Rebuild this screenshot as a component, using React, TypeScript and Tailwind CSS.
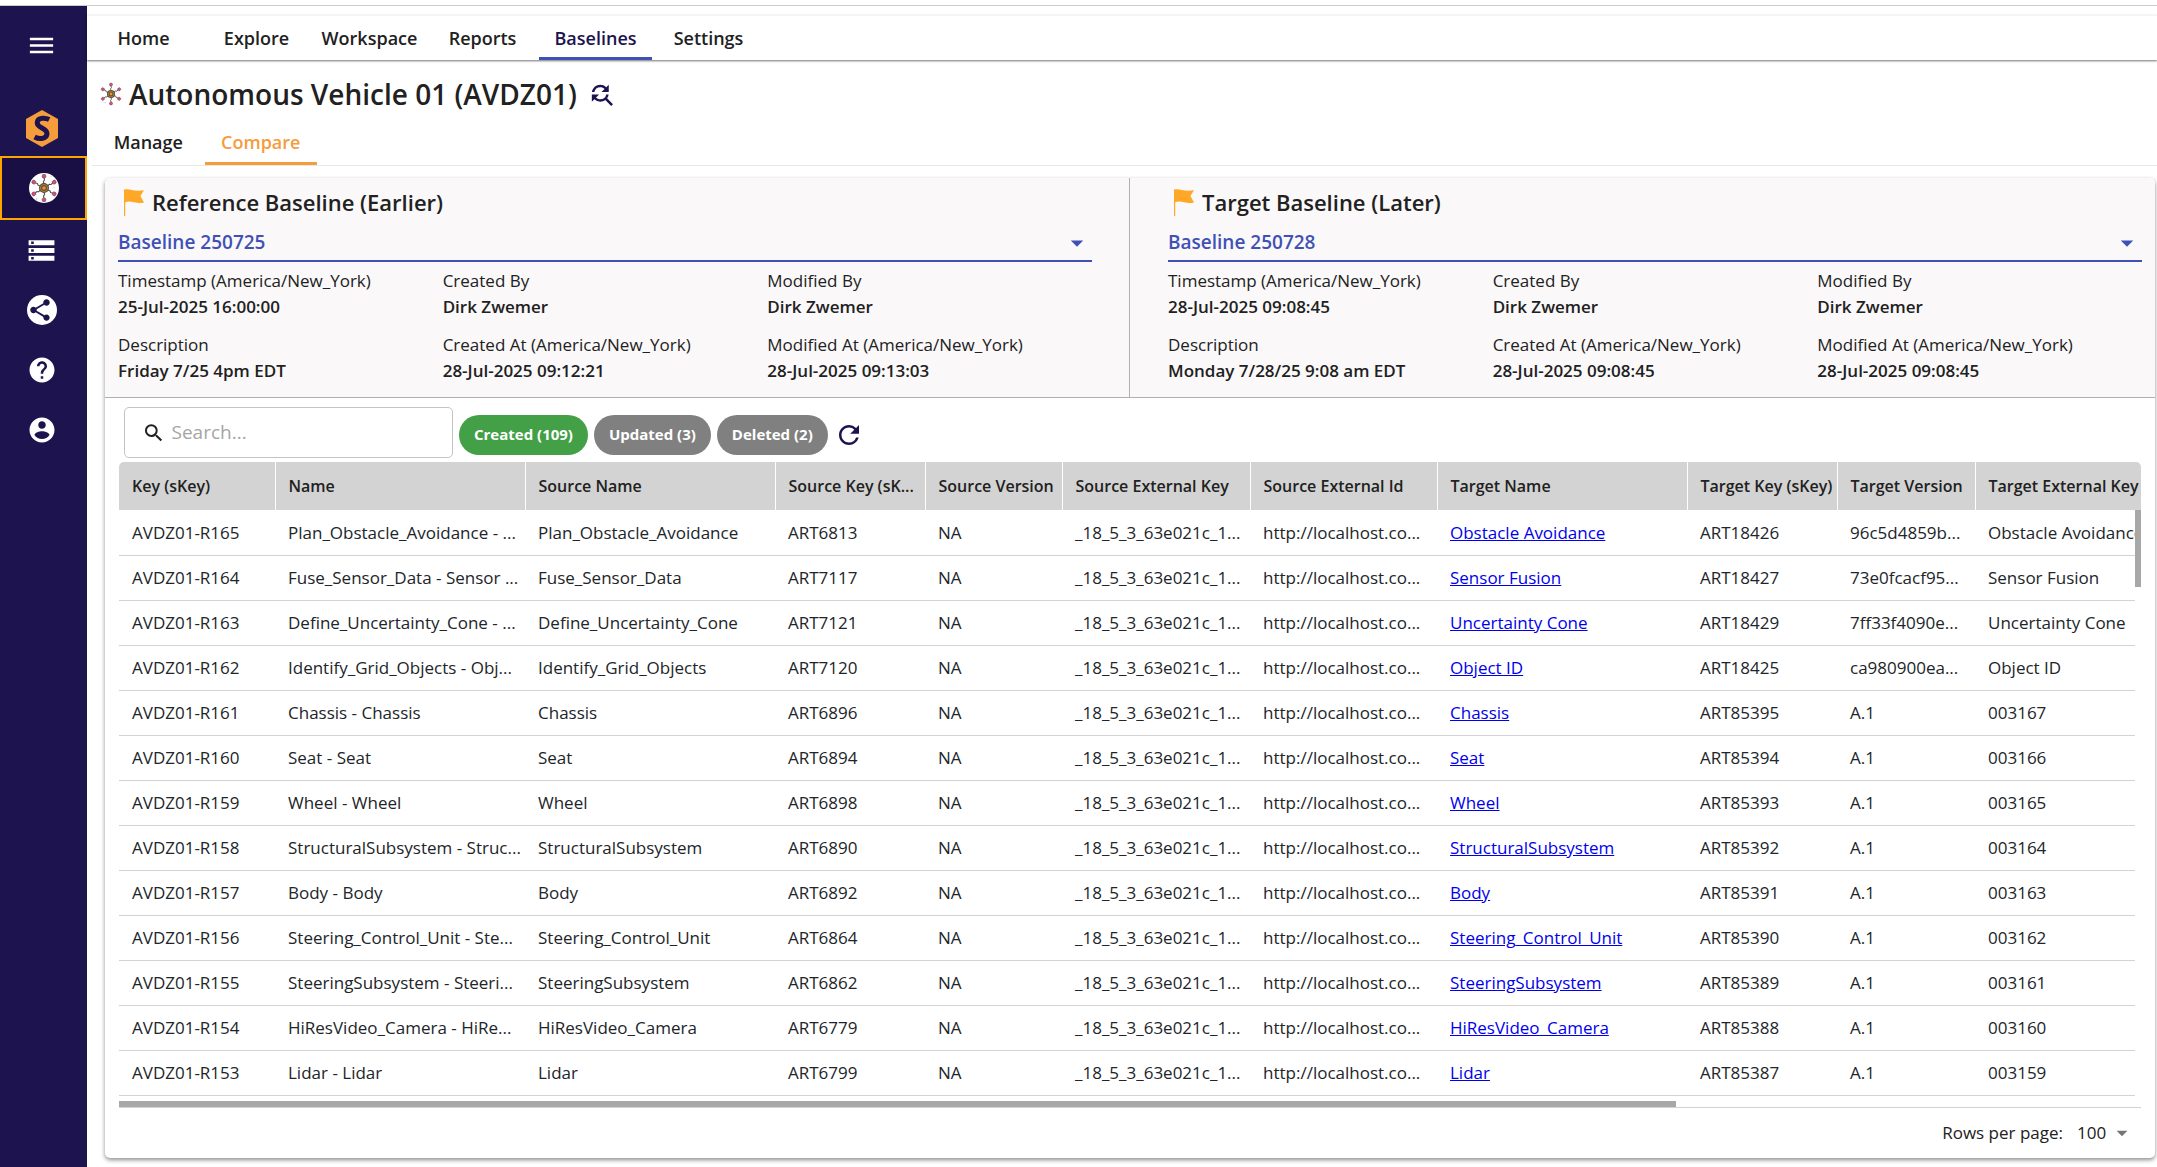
import { useState } from "react";
import {
  MdArrowDropDown,
  MdFindReplace,
  MdHelp,
  MdMenu,
  MdRefresh,
  MdSearch,
  MdShare,
  MdStorage,
} from "react-icons/md";

interface Baseline {
  id: string;
  title: string;
  name: string;
  fields: [string, string][];
}

const BASELINES: Baseline[] = [
  {
    id: "reference",
    title: "Reference Baseline (Earlier)",
    name: "Baseline 250725",
    fields: [
      ["Timestamp (America/New_York)", "25-Jul-2025 16:00:00"],
      ["Created By", "Dirk Zwemer"],
      ["Modified By", "Dirk Zwemer"],
      ["Description", "Friday 7/25 4pm EDT"],
      ["Created At (America/New_York)", "28-Jul-2025 09:12:21"],
      ["Modified At (America/New_York)", "28-Jul-2025 09:13:03"],
    ],
  },
  {
    id: "target",
    title: "Target Baseline (Later)",
    name: "Baseline 250728",
    fields: [
      ["Timestamp (America/New_York)", "28-Jul-2025 09:08:45"],
      ["Created By", "Dirk Zwemer"],
      ["Modified By", "Dirk Zwemer"],
      ["Description", "Monday 7/28/25 9:08 am EDT"],
      ["Created At (America/New_York)", "28-Jul-2025 09:08:45"],
      ["Modified At (America/New_York)", "28-Jul-2025 09:08:45"],
    ],
  },
];

const NAV_TABS = ["Home", "Explore", "Workspace", "Reports", "Baselines", "Settings"];

const COLUMNS = [
  { label: "Key (sKey)", width: "w-[156px]" },
  { label: "Name", width: "w-[250px]" },
  { label: "Source Name", width: "w-[250px]" },
  { label: "Source Key (sK...", width: "w-[150px]" },
  { label: "Source Version", width: "w-[137px]" },
  { label: "Source External Key", width: "w-[188px]" },
  { label: "Source External Id", width: "w-[187px]" },
  { label: "Target Name", width: "w-[250px]" },
  { label: "Target Key (sKey)", width: "w-[150px]" },
  { label: "Target Version", width: "w-[138px]" },
  { label: "Target External Key", width: "w-[188px]" },
];

// key, name, source name, source key, target name, target key, target version, target external key
const ROWS = [
  ["AVDZ01-R165", "Plan_Obstacle_Avoidance - ...", "Plan_Obstacle_Avoidance", "ART6813", "Obstacle Avoidance", "ART18426", "96c5d4859b...", "Obstacle Avoidance"],
  ["AVDZ01-R164", "Fuse_Sensor_Data - Sensor ...", "Fuse_Sensor_Data", "ART7117", "Sensor Fusion", "ART18427", "73e0fcacf95...", "Sensor Fusion"],
  ["AVDZ01-R163", "Define_Uncertainty_Cone - ...", "Define_Uncertainty_Cone", "ART7121", "Uncertainty Cone", "ART18429", "7ff33f4090e...", "Uncertainty Cone"],
  ["AVDZ01-R162", "Identify_Grid_Objects - Obj...", "Identify_Grid_Objects", "ART7120", "Object ID", "ART18425", "ca980900ea...", "Object ID"],
  ["AVDZ01-R161", "Chassis - Chassis", "Chassis", "ART6896", "Chassis", "ART85395", "A.1", "003167"],
  ["AVDZ01-R160", "Seat - Seat", "Seat", "ART6894", "Seat", "ART85394", "A.1", "003166"],
  ["AVDZ01-R159", "Wheel - Wheel", "Wheel", "ART6898", "Wheel", "ART85393", "A.1", "003165"],
  ["AVDZ01-R158", "StructuralSubsystem - Struc...", "StructuralSubsystem", "ART6890", "StructuralSubsystem", "ART85392", "A.1", "003164"],
  ["AVDZ01-R157", "Body - Body", "Body", "ART6892", "Body", "ART85391", "A.1", "003163"],
  ["AVDZ01-R156", "Steering_Control_Unit - Ste...", "Steering_Control_Unit", "ART6864", "Steering_Control_Unit", "ART85390", "A.1", "003162"],
  ["AVDZ01-R155", "SteeringSubsystem - Steeri...", "SteeringSubsystem", "ART6862", "SteeringSubsystem", "ART85389", "A.1", "003161"],
  ["AVDZ01-R154", "HiResVideo_Camera - HiRe...", "HiResVideo_Camera", "ART6779", "HiResVideo_Camera", "ART85388", "A.1", "003160"],
  ["AVDZ01-R153", "Lidar - Lidar", "Lidar", "ART6799", "Lidar", "ART85387", "A.1", "003159"],
];

const SPOKES = [0, 60, 120, 180, 240, 300];

function NetworkIcon({ className }: { className?: string }) {
  return (
    <svg className={className} viewBox="0 0 30 30" fill="none">
      {SPOKES.map((deg) => (
        <g key={deg} transform={`rotate(${deg} 15 15)`}>
          <path d="M15 11 L14.4 8.6 L15.5 7 L15 5" stroke="#55505a" strokeWidth="1.1" />
          <circle cx="15" cy="3.2" r="1.9" fill="#d0567a" stroke="#6b3040" strokeWidth="0.6" />
        </g>
      ))}
      <circle cx="15" cy="15" r="5" fill="#5b4a2c" />
      <circle cx="15" cy="15" r="3.5" stroke="#b08a45" strokeWidth="1" />
      <circle cx="15" cy="15" r="1.8" fill="#f4903c" />
      <circle cx="22" cy="3.6" r="0.6" fill="#f7c873" />
      <circle cx="7.6" cy="26" r="0.7" fill="#8ed66b" />
      <circle cx="25" cy="14.6" r="0.5" fill="#f09ab0" />
    </svg>
  );
}

function LogoIcon() {
  return (
    <svg className="h-[37px] w-8" viewBox="0 0 32 37">
      <path d="M16 0 L32 9 V28 L16 37 L0 28 V9 Z" fill="#f59c3c" />
      <path
        d="M23.2 9.6 C18.5 7.2 11.2 7.6 11.2 12.8 C11.2 18.6 21 17.4 21 23.6 C21 29.2 13.5 29.6 8.6 27"
        fill="none"
        stroke="#1c134f"
        strokeWidth="5"
      />
    </svg>
  );
}

function AccountIcon() {
  return (
    <svg className="size-[30px]" viewBox="0 0 24 24" fill="currentColor">
      <path d="M12 2C6.48 2 2 6.48 2 12s4.48 10 10 10 10-4.48 10-10S17.52 2 12 2zm0 3c1.66 0 3 1.34 3 3s-1.34 3-3 3-3-1.34-3-3 1.34-3 3-3zm0 14.2c-2.5 0-4.71-1.28-6-3.22.03-1.99 4-3.08 6-3.08 1.99 0 5.97 1.09 6 3.08-1.29 1.94-3.5 3.22-6 3.22z" />
    </svg>
  );
}

function FlagIcon() {
  return (
    <svg className="h-[27px] w-5" viewBox="0 0 20 27" fill="#ffa726">
      <path d="M0 0.8 C5 -1 9 3 20 1.2 L16.4 7 L20 13.4 C13 15.6 7 11 1.2 13.2 V27 H0 Z" />
    </svg>
  );
}

function Sidebar() {
  return (
    <nav className="flex w-[87px] shrink-0 flex-col items-center bg-[#1c134f] pt-5 text-white" aria-label="Main">
      <button className="flex h-[38px] w-full items-center justify-center pr-1" aria-label="Menu">
        <MdMenu className="size-[31px]" />
      </button>
      <a href="#home" className="mt-8 flex h-[60px] w-full items-center justify-center pr-1 pt-1" aria-label="Home">
        <LogoIcon />
      </a>
      <a href="#network" className="flex h-16 w-full items-center justify-center border-2 border-[#ffa500] bg-[#190f45]" aria-label="Network">
        <span className="rounded-full bg-white">
          <NetworkIcon className="size-[30px]" />
        </span>
      </a>
      <a href="#storage" className="flex h-[60px] w-full items-center justify-center pr-1" aria-label="Repositories">
        <MdStorage className="size-[31px]" />
      </a>
      <a href="#share" className="flex h-[60px] w-full items-center justify-center pr-1" aria-label="Share">
        <span className="flex size-[30px] items-center justify-center rounded-full bg-white text-[#1c134f]">
          <MdShare className="mr-1 size-[26px]" />
        </span>
      </a>
      <a href="#help" className="flex h-[60px] w-full items-center justify-center pr-1" aria-label="Help">
        <MdHelp className="size-[30px]" />
      </a>
      <a href="#account" className="flex h-[60px] w-full items-center justify-center pr-1" aria-label="Account">
        <AccountIcon />
      </a>
    </nav>
  );
}

function BaselinePanel({ baseline, className }: { baseline: Baseline; className: string }) {
  return (
    <section className={`flex-1 pt-[7px] pb-[13px] ${className}`}>
      <h2 className="flex h-[35px] items-center gap-2 pl-1.5 text-[22px] font-semibold">
        <FlagIcon />
        {baseline.title}
      </h2>
      <div className="relative border-b-2 border-[#3f51b5] text-[#3f51b5]">
        <select
          aria-label={baseline.title}
          className="h-10 w-full appearance-none bg-transparent pt-1 text-[19px] font-semibold outline-none"
        >
          <option>{baseline.name}</option>
        </select>
        <MdArrowDropDown className="pointer-events-none absolute top-2 right-0 size-[30px]" />
      </div>
      <dl className="mt-1.5 grid grid-cols-3 gap-y-3 text-[17px] leading-[26px]">
        {baseline.fields.map(([label, value]) => (
          <div key={label}>
            <dt>{label}</dt>
            <dd className="font-semibold">{value}</dd>
          </div>
        ))}
      </dl>
    </section>
  );
}

const CHIPS = ["Created (109)", "Updated (3)", "Deleted (2)"];

function Toolbar() {
  const [active, setActive] = useState(CHIPS[0]);

  return (
    <div className="flex items-center gap-1.5 pt-[9px] pb-1 pl-[5px]">
      <label className="flex h-[51px] w-[329px] items-center gap-1.5 rounded-[5px] border border-[#c4c4c4] pl-[17px]">
        <MdSearch className="size-[26px]" />
        <input
          type="text"
          placeholder="Search..."
          aria-label="Search"
          className="w-full bg-transparent text-[19px] outline-none placeholder:text-[#a5a5a5]"
        />
      </label>
      {CHIPS.map((chip) => (
        <button
          key={chip}
          onClick={() => setActive(chip)}
          className={`mt-1 h-10 rounded-[20px] px-[15px] text-[15px] font-bold text-white ${
            chip === active ? "bg-[#43a047]" : "bg-[#808080]"
          }`}
        >
          {chip}
        </button>
      ))}
      <button className="mt-1 text-[#1c134f]" aria-label="Refresh">
        <MdRefresh className="size-[30px]" />
      </button>
    </div>
  );
}

function ChangesTable() {
  return (
    <div className="relative overflow-hidden rounded-t-[5px] pb-[5px]">
      <table className="w-[2044px] table-fixed border-collapse text-left text-[17px] text-[#212529]">
        <thead>
          <tr className="h-12 bg-[#d3d3d3] text-base text-[#212121]">
            {COLUMNS.map((col) => (
              <th
                key={col.label}
                className={`${col.width} border-r border-white pl-[13px] font-semibold whitespace-nowrap`}
              >
                {col.label}
              </th>
            ))}
          </tr>
        </thead>
        <tbody>
          {ROWS.map(([key, name, source, sourceKey, target, targetKey, version, externalKey]) => (
            <tr key={key} className="h-[45px] border-b border-[#d3d3d3] whitespace-nowrap">
              <td className="pl-[13px]">{key}</td>
              <td className="pl-[13px]">{name}</td>
              <td className="pl-[13px]">{source}</td>
              <td className="pl-[13px]">{sourceKey}</td>
              <td className="pl-[13px]">NA</td>
              <td className="pl-[13px]">_18_5_3_63e021c_1...</td>
              <td className="pl-[13px]">http://localhost.co...</td>
              <td className="pl-[13px]">
                <a href="#artifact" className="text-[#0000ee] underline">
                  {target}
                </a>
              </td>
              <td className="pl-[13px]">{targetKey}</td>
              <td className="pl-[13px]">{version}</td>
              <td className="pl-[13px]">{externalKey}</td>
            </tr>
          ))}
        </tbody>
      </table>
      {/* Vertical scrollbar */}
      <div className="absolute top-12 right-0 bottom-0 w-1.5 bg-white">
        <div className="h-[77px] bg-[#a8a8a8]" />
      </div>
    </div>
  );
}

export default function App() {
  return (
    <div className="bg-white pt-[5px] font-['Open_Sans','Noto_Sans',sans-serif] text-[#212121]">
      <div className="flex min-h-[calc(100vh-5px)] border-t border-[#cccccc]">
        <Sidebar />
        <main className="min-w-0 flex-1">
          <header className="mt-[9px] border-t border-[#f5f5f5] shadow-[0_1px_2px_rgba(0,0,0,0.55)]">
            <div className="flex h-11 w-[678px] text-[18px] font-semibold">
              {NAV_TABS.map((tab) => (
                <button
                  key={tab}
                  className={
                    tab === "Baselines"
                      ? "flex-1 border-b-3 border-[#3f51b5] pt-[3px] text-[#1c134f]"
                      : "flex-1 border-b-3 border-transparent pt-[3px]"
                  }
                >
                  {tab}
                </button>
              ))}
            </div>
          </header>

          <h1 className="mt-3 flex h-11 items-center gap-1.5 pl-3 text-[28px] font-semibold">
            <NetworkIcon className="size-6" />
            Autonomous Vehicle 01 (AVDZ01)
            <button className="ml-1 text-[#1c134f]" aria-label="Find baseline">
              <MdFindReplace className="size-[29px]" />
            </button>
          </h1>

          <div className="ml-[5px] border-b border-[#e8e8e8] pt-[5px]">
            <div className="flex h-11 w-[225px] text-[18px] font-semibold">
              <button className="flex-1 border-b-3 border-transparent pt-0.5">Manage</button>
              <button className="flex-1 border-b-3 border-[#f59c3c] pt-0.5 text-[#f59c3c]">Compare</button>
            </div>
          </div>

          <div className="mt-3 mr-0.5 ml-[18px] overflow-hidden rounded-[5px] shadow-[0_2px_4px_rgba(0,0,0,0.45)]">
            <div className="flex border-b border-[#b0b0b0] bg-[#faf8f9]">
              <BaselinePanel baseline={BASELINES[0]} className="border-r border-[#b0b0b0] pr-[37px] pl-[13px]" />
              <BaselinePanel baseline={BASELINES[1]} className="pr-[13px] pl-[38px]" />
            </div>
            <div className="px-[14px]">
              <Toolbar />
              <ChangesTable />
              <div className="border-b border-[#d3d3d3]">
                <div className="h-1.5 w-[77%] bg-[#a8a8a8]" />
              </div>
              <div className="flex h-[50px] items-center justify-end gap-3.5 text-[17px]">
                <label htmlFor="page-size">Rows per page:</label>
                <div className="relative mr-3.5">
                  <select id="page-size" className="w-[50px] appearance-none bg-transparent outline-none">
                    <option>100</option>
                  </select>
                  <MdArrowDropDown className="pointer-events-none absolute top-0 -right-2 size-[26px] text-[#757575]" />
                </div>
              </div>
            </div>
          </div>
        </main>
      </div>
    </div>
  );
}
